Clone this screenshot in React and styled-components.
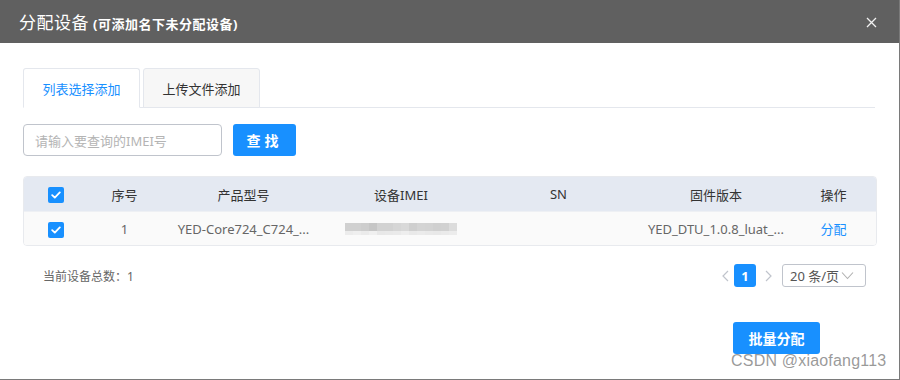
import React from 'react'
import styled, {createGlobalStyle} from 'styled-components'

const Global = createGlobalStyle`
    html, body {
        margin: 0;
        padding: 0;
        background: #fff;
        font-family: "Noto Sans", "Noto Sans CJK SC", sans-serif;
    }
`

const BLUE = '#1890ff'

const Dialog = styled.div`
    position: relative;
    width: 900px;
    height: 380px;
    box-sizing: border-box;
    border-right: 1px solid #7a7a7a;
    border-bottom: 1px solid #7a7a7a;
    display: flex;
    flex-flow: column;
`

const Header = styled.div`
    height: 43px;
    background: #606060;
    display: flex;
    align-items: center;
    justify-content: space-between;
    padding: 0 22px 0 19px;
    color: #fff;

    >.title {
        font-size: 17px;
        letter-spacing: 0.5px;
    }

    >.title small {
        font-size: 13px;
        font-weight: bold;
        margin-left: 4px;
    }
`

const Close = styled.svg`
    width: 11px;
    height: 11px;
    margin-top: 2px;
`

const Body = styled.div`
    padding: 25px 24px 0 23px;
    display: flex;
    flex-flow: column;
    flex-grow: 1;
`

const Tabs = styled.div`
    display: flex;
    gap: 3px;
    border-bottom: 1px solid #e4e7ed;
    height: 39px;
`

const Tab = styled.div`
    width: 117px;
    height: 40px;
    box-sizing: border-box;
    border: 1px solid #e4e7ed;
    border-bottom: ${p => p.active ? '1px solid #fff' : '1px solid #e4e7ed'};
    border-radius: 3px 3px 0 0;
    background: ${p => p.active ? '#fff' : '#f7f7f7'};
    color: ${p => p.active ? BLUE : '#333'};
    font-size: 13px;
    display: flex;
    align-items: center;
    justify-content: center;
    padding-top: 1px;
`

const SearchRow = styled.div`
    display: flex;
    align-items: center;
    gap: 11px;
    margin-top: 16px;
`

const Input = styled.div`
    width: 199px;
    height: 32px;
    box-sizing: border-box;
    border: 1px solid #c0c4cc;
    border-radius: 4px;
    color: #b4b4b4;
    font-size: 13px;
    padding-left: 11px;
    display: flex;
    align-items: center;
`

const Button = styled.div`
    width: ${p => p.w}px;
    height: 32px;
    border-radius: 3px;
    background: ${BLUE};
    color: #fff;
    font-size: 14px;
    font-weight: bold;
    letter-spacing: ${p => p.spacing || 0}px;
    display: flex;
    align-items: center;
    justify-content: center;
`

const Table = styled.div`
    margin-top: 20px;
    width: 852px;
    border: 1px solid #e8eaee;
    border-radius: 4px;
    overflow: hidden;
`

const Row = styled.div`
    display: grid;
    grid-template-columns: 64px 73px 165px 150px 165px 150px 85px;
    height: ${p => p.head ? 34 : 33}px;
    align-items: center;
    background: ${p => p.head ? '#e4e9f2' : '#fafafa'};
    color: ${p => p.head ? '#333' : '#666'};
    font-size: 13px;
    border-top: ${p => p.head ? 'none' : '1px solid #eef0f4'};

    >div {
        text-align: center;
        white-space: nowrap;
    }
`

const Check = styled.span`
    display: inline-flex;
    width: 16px;
    height: 16px;
    border-radius: 2px;
    background: ${BLUE};
    align-items: center;
    justify-content: center;
    vertical-align: middle;
`

const Blur = styled.div`
    display: flex;
    flex-flow: column;
    align-items: center;

    >.line {
        display: flex;
    }

    >.line span {
        width: 8px;
        height: 8px;
    }

    >.line.low span {
        height: 4px;
    }
`

const Link = styled.span`
    color: ${BLUE};
`

const Footer = styled.div`
    display: flex;
    justify-content: space-between;
    align-items: center;
    margin-top: 18px;
    padding: 0 9px 0 20px;
    font-size: 12px;
    color: #666;
`

const Pager = styled.div`
    display: flex;
    align-items: center;
`

const Arrow = styled.svg`
    width: 16px;
    height: 16px;
    margin: 0 ${p => p.mr}px 0 ${p => p.ml}px;
`

const PageNum = styled.div`
    width: 22px;
    height: 23px;
    border-radius: 3px;
    background: ${BLUE};
    color: #fff;
    font-weight: bold;
    font-size: 13px;
    display: flex;
    align-items: center;
    justify-content: center;
`

const Size = styled.div`
    width: 84px;
    height: 23px;
    box-sizing: border-box;
    border: 1px solid #c0c4cc;
    border-radius: 3px;
    font-size: 13px;
    color: #555;
    display: flex;
    align-items: center;
    padding-left: 7px;
    gap: 2px;
    margin-left: 6px;
`

const Actions = styled.div`
    display: flex;
    justify-content: flex-end;
    margin-top: 35px;
    padding-right: 55px;
`

const Watermark = styled.div`
    position: absolute;
    left: 731px;
    top: 352px;
    font-family: "Liberation Sans", Arial, sans-serif;
    font-size: 16px;
    line-height: 18px;
    color: rgba(120,120,120,0.75);
    letter-spacing: 0.2px;
`

const blurTop = ['#d0d0d0','#d0d0d0','#cdcdcd','#c6c6c6','#d2d2d2','#d2d2d2','#d6d6d6','#d9d9d9','#cfcfcf','#d4d4d4','#d3d3d3','#d0d0d0','#d1d1d1','#dcdcdc']
const blurLow = ['#ececec','#efefef','#ebebeb','#f0f0f0','#e8e8e8','#e9e9e9','#eaeaea','#eeeeee','#e9e9e9','#ebebeb','#e9e9e9','#e8e8e8','#eaeaea','#ececec']

const Tick = () => (
    <Check>
        <svg width="10" height="8" viewBox="0 0 10 8">
            <path d="M1.2 4.2 L3.8 6.6 L8.8 1.4" fill="none" stroke="#fff" strokeWidth="1.8" strokeLinecap="round" strokeLinejoin="round"/>
        </svg>
    </Check>
)

const App = () => (
    <>
        <Global/>
        <Dialog>
            <Header>
                <div className="title">分配设备<small>(可添加名下未分配设备)</small></div>
                <Close viewBox="0 0 11 11">
                    <path d="M1 1 L10 10 M10 1 L1 10" stroke="#f2f2f2" strokeWidth="1.3"/>
                </Close>
            </Header>
            <Body>
                <Tabs>
                    <Tab active>列表选择添加</Tab>
                    <Tab>上传文件添加</Tab>
                </Tabs>
                <SearchRow>
                    <Input>请输入要查询的IMEI号</Input>
                    <Button w={63} spacing={4}>查找</Button>
                </SearchRow>
                <Table>
                    <Row head>
                        <div><Tick/></div>
                        <div>序号</div>
                        <div>产品型号</div>
                        <div>设备IMEI</div>
                        <div>SN</div>
                        <div>固件版本</div>
                        <div>操作</div>
                    </Row>
                    <Row>
                        <div><Tick/></div>
                        <div>1</div>
                        <div>YED-Core724_C724_...</div>
                        <Blur>
                            <div className="line">{blurTop.map((c, i) => <span key={i} style={{background: c}}/>)}</div>
                            <div className="line low">{blurLow.map((c, i) => <span key={i} style={{background: c}}/>)}</div>
                        </Blur>
                        <div></div>
                        <div>YED_DTU_1.0.8_luat_...</div>
                        <div><Link>分配</Link></div>
                    </Row>
                </Table>
                <Footer>
                    <span>当前设备总数：1</span>
                    <Pager>
                        <Arrow viewBox="0 0 16 16" ml={0} mr={0}>
                            <path d="M10 3 L5 8 L10 13" fill="none" stroke="#c0c4cc" strokeWidth="1.2"/>
                        </Arrow>
                        <PageNum>1</PageNum>
                        <Arrow viewBox="0 0 16 16" ml={4} mr={0}>
                            <path d="M6 3 L11 8 L6 13" fill="none" stroke="#c0c4cc" strokeWidth="1.2"/>
                        </Arrow>
                        <Size>
                            20 条/页
                            <svg width="13" height="9" viewBox="0 0 13 9">
                                <path d="M1 1.5 L6.5 7.5 L12 1.5" fill="none" stroke="#b0b0b0" strokeWidth="1.1"/>
                            </svg>
                        </Size>
                    </Pager>
                </Footer>
                <Actions>
                    <Button w={87}>批量分配</Button>
                </Actions>
            </Body>
            <Watermark>CSDN @xiaofang113</Watermark>
        </Dialog>
    </>
)

export default App
